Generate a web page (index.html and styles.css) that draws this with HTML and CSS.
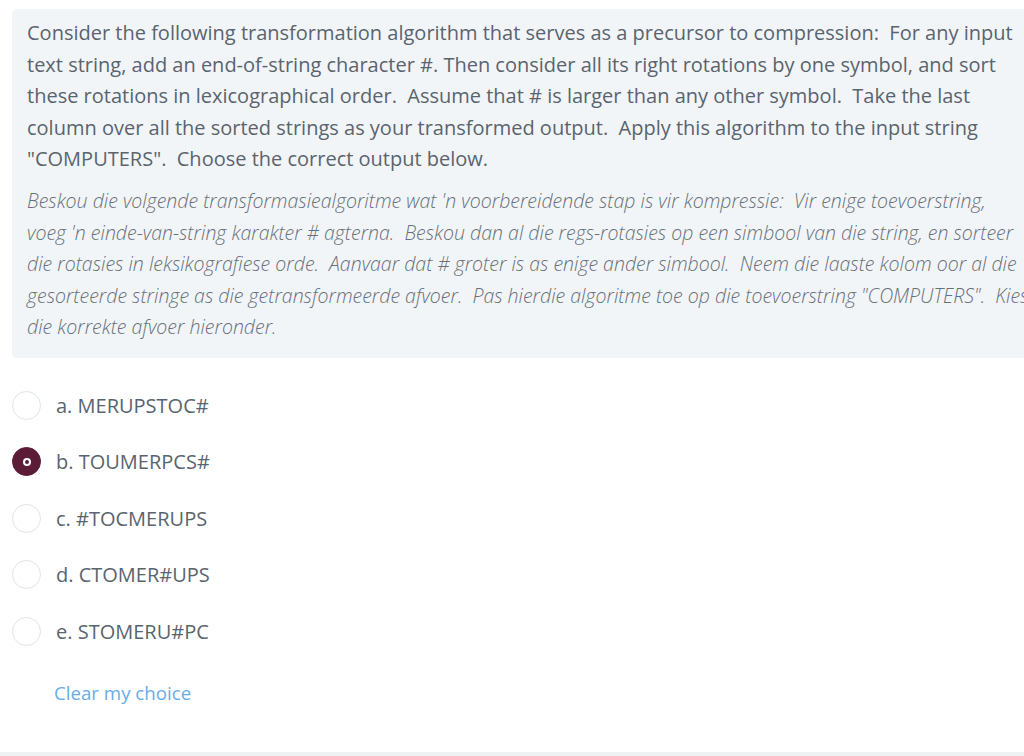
FILE: index.html
```html
<!DOCTYPE html>
<html>
<head>
<meta charset="utf-8">
<link rel="stylesheet" href="styles.css">
</head>
<body>
<div class="page">
  <div class="qtext">
    <p class="en">Consider the following transformation algorithm that serves as a precursor to compression:&nbsp; For any input<br>text string, add an end-of-string character #. Then consider all its right rotations by one symbol, and sort<br>these rotations in lexicographical order.&nbsp; Assume that # is larger than any other symbol.&nbsp; Take the last<br>column over all the sorted strings as your transformed output.&nbsp; Apply this algorithm to the input string<br>"COMPUTERS".&nbsp; Choose the correct output below.</p>
    <p class="af">Beskou die volgende transformasiealgoritme wat 'n voorbereidende stap is vir kompressie:&nbsp; Vir enige toevoerstring,<br>voeg 'n einde-van-string karakter # agterna.&nbsp; Beskou dan al die regs-rotasies op een simbool van die string, en sorteer<br>die rotasies in leksikografiese orde.&nbsp; Aanvaar dat # groter is as enige ander simbool.&nbsp; Neem die laaste kolom oor al die<br>gesorteerde stringe as die getransformeerde afvoer.&nbsp; Pas hierdie algoritme toe op die toevoerstring "COMPUTERS".&nbsp; Kies<br>die korrekte afvoer hieronder.</p>
  </div>
  <div class="answers">
    <label class="opt"><span class="radio"></span><span class="lbl">a. MERUPSTOC#</span></label>
    <label class="opt"><span class="radio checked"></span><span class="lbl">b. TOUMERPCS#</span></label>
    <label class="opt"><span class="radio"></span><span class="lbl">c. #TOCMERUPS</span></label>
    <label class="opt"><span class="radio"></span><span class="lbl">d. CTOMER#UPS</span></label>
    <label class="opt"><span class="radio"></span><span class="lbl">e. STOMERU#PC</span></label>
  </div>
  <a class="clear" href="#">Clear my choice</a>
</div>
<div class="footer-bar"></div>
</body>
</html>
```

FILE: styles.css
```css
html, body {
  margin: 0;
  padding: 0;
  background: #ffffff;
  overflow: hidden;
  width: 1024px;
  height: 756px;
}
body {
  font-family: "Open Sans", "Liberation Sans", sans-serif;
  color: #5a646e;
  position: relative;
}
.page {
  padding: 9px 0 0 12px;
  width: 1024px;
  box-sizing: border-box;
  overflow: hidden;
}
.qtext {
  background: #f2f5f8;
  border-radius: 5px 0 0 5px;
  margin-right: -40px;
  padding: 8px 0 14px 15px;
  box-sizing: border-box;
  height: 349px;
  overflow: hidden;
}
.qtext p {
  margin: 0;
  white-space: nowrap;
}
.en {
  font-size: 20px;
  line-height: 31.6px;
}
.af {
  margin-top: 10px !important;
  font-size: 19.5px;
  font-style: italic;
  font-weight: 300;
  line-height: 31.6px;
  color: #68717a;
}
.answers {
  margin-top: 19px;
  display: flex;
  flex-direction: column;
}
.opt {
  display: flex;
  align-items: center;
  height: 56.5px;
}
.radio {
  width: 29px;
  height: 29px;
  box-sizing: border-box;
  border: 1.5px solid #dfe5ea;
  border-radius: 50%;
  background: #fff;
  display: flex;
  align-items: center;
  justify-content: center;
  flex: none;
}
.radio.checked {
  background: #5c1c38;
  border-color: #5c1c38;
}
.radio.checked::after {
  content: "";
  width: 4px;
  height: 4px;
  border-radius: 50%;
  background: #5c1c38;
  border: 2px solid #ffffff;
}
.lbl {
  margin-left: 15px;
  font-size: 20px;
  color: #5a646e;
}
.clear {
  display: inline-block;
  margin-top: 20px;
  margin-left: 42px;
  font-size: 18.7px;
  color: #6aace6;
  text-decoration: none;
}
.footer-bar {
  position: absolute;
  left: 0;
  right: 0;
  bottom: 0;
  height: 4px;
  background: #eef2f2;
}
```
